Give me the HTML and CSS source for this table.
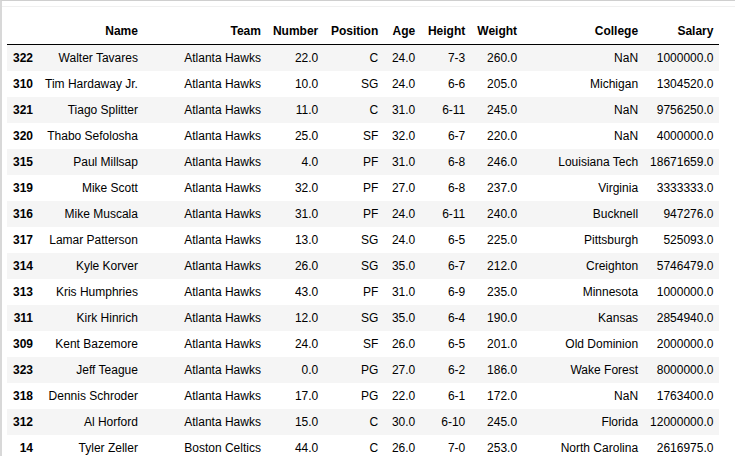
FILE: index.html
```html
<!DOCTYPE html>
<html>
<head>
<meta charset="utf-8">
<link rel="stylesheet" href="styles.css">
</head>
<body>
<div class="frame">
<div class="output">
<table class="dataframe">
<thead>
<tr><th></th><th>Name</th><th class="col-team">Team</th><th>Number</th><th class="col-position">Position</th><th class="col-age">Age</th><th class="col-height">Height</th><th>Weight</th><th class="col-college">College</th><th>Salary</th></tr>
</thead>
<tbody>
<tr><th>322</th><td>Walter Tavares</td><td>Atlanta Hawks</td><td>22.0</td><td>C</td><td>24.0</td><td>7-3</td><td>260.0</td><td>NaN</td><td>1000000.0</td></tr>
<tr><th>310</th><td>Tim Hardaway Jr.</td><td>Atlanta Hawks</td><td>10.0</td><td>SG</td><td>24.0</td><td>6-6</td><td>205.0</td><td>Michigan</td><td>1304520.0</td></tr>
<tr><th>321</th><td>Tiago Splitter</td><td>Atlanta Hawks</td><td>11.0</td><td>C</td><td>31.0</td><td>6-11</td><td>245.0</td><td>NaN</td><td>9756250.0</td></tr>
<tr><th>320</th><td>Thabo Sefolosha</td><td>Atlanta Hawks</td><td>25.0</td><td>SF</td><td>32.0</td><td>6-7</td><td>220.0</td><td>NaN</td><td>4000000.0</td></tr>
<tr><th>315</th><td>Paul Millsap</td><td>Atlanta Hawks</td><td>4.0</td><td>PF</td><td>31.0</td><td>6-8</td><td>246.0</td><td>Louisiana Tech</td><td>18671659.0</td></tr>
<tr><th>319</th><td>Mike Scott</td><td>Atlanta Hawks</td><td>32.0</td><td>PF</td><td>27.0</td><td>6-8</td><td>237.0</td><td>Virginia</td><td>3333333.0</td></tr>
<tr><th>316</th><td>Mike Muscala</td><td>Atlanta Hawks</td><td>31.0</td><td>PF</td><td>24.0</td><td>6-11</td><td>240.0</td><td>Bucknell</td><td>947276.0</td></tr>
<tr><th>317</th><td>Lamar Patterson</td><td>Atlanta Hawks</td><td>13.0</td><td>SG</td><td>24.0</td><td>6-5</td><td>225.0</td><td>Pittsburgh</td><td>525093.0</td></tr>
<tr><th>314</th><td>Kyle Korver</td><td>Atlanta Hawks</td><td>26.0</td><td>SG</td><td>35.0</td><td>6-7</td><td>212.0</td><td>Creighton</td><td>5746479.0</td></tr>
<tr><th>313</th><td>Kris Humphries</td><td>Atlanta Hawks</td><td>43.0</td><td>PF</td><td>31.0</td><td>6-9</td><td>235.0</td><td>Minnesota</td><td>1000000.0</td></tr>
<tr><th>311</th><td>Kirk Hinrich</td><td>Atlanta Hawks</td><td>12.0</td><td>SG</td><td>35.0</td><td>6-4</td><td>190.0</td><td>Kansas</td><td>2854940.0</td></tr>
<tr><th>309</th><td>Kent Bazemore</td><td>Atlanta Hawks</td><td>24.0</td><td>SF</td><td>26.0</td><td>6-5</td><td>201.0</td><td>Old Dominion</td><td>2000000.0</td></tr>
<tr><th>323</th><td>Jeff Teague</td><td>Atlanta Hawks</td><td>0.0</td><td>PG</td><td>27.0</td><td>6-2</td><td>186.0</td><td>Wake Forest</td><td>8000000.0</td></tr>
<tr><th>318</th><td>Dennis Schroder</td><td>Atlanta Hawks</td><td>17.0</td><td>PG</td><td>22.0</td><td>6-1</td><td>172.0</td><td>NaN</td><td>1763400.0</td></tr>
<tr><th>312</th><td>Al Horford</td><td>Atlanta Hawks</td><td>15.0</td><td>C</td><td>30.0</td><td>6-10</td><td>245.0</td><td>Florida</td><td>12000000.0</td></tr>
<tr><th>14</th><td>Tyler Zeller</td><td>Boston Celtics</td><td>44.0</td><td>C</td><td>26.0</td><td>7-0</td><td>253.0</td><td>North Carolina</td><td>2616975.0</td></tr>
</tbody>
</table>
</div>
</div>
</body>
</html>
```
FILE: styles.css
```css
html, body {
  margin: 0;
  padding: 0;
  background: #fff;
}
.frame {
  border-top: 1px solid #cfcfcf;
  border-left: 2px solid #d8d8d8;
  height: 456px;
  overflow: hidden;
  box-sizing: border-box;
}
.output {
  margin-top: 5px;
  border-top: 1px solid #f0f0f0;
  padding: 11px 0 0 5px;
}
.dataframe {
  border-collapse: collapse;
  border-spacing: 0;
  border: none;
  font-family: "Liberation Sans", Arial, sans-serif;
  font-size: 12px;
  color: #000;
  table-layout: auto;
}
.dataframe th,
.dataframe td {
  padding: 6px;
  line-height: 14px;
  text-align: right;
  vertical-align: middle;
  white-space: nowrap;
  border: none;
}
.dataframe thead th {
  font-weight: bold;
  border-bottom: 1px solid #000;
}
.dataframe thead th.col-team {
  width: 111px;
}
.dataframe thead th.col-position {
  width: 48px;
}
.dataframe thead th.col-age {
  width: 25px;
}
.dataframe thead th.col-height {
  width: 38px;
}
.dataframe thead th.col-college {
  width: 109px;
}
.dataframe tbody th {
  font-weight: bold;
}
.dataframe tbody tr:nth-child(odd) {
  background: #f5f5f5;
}
```
